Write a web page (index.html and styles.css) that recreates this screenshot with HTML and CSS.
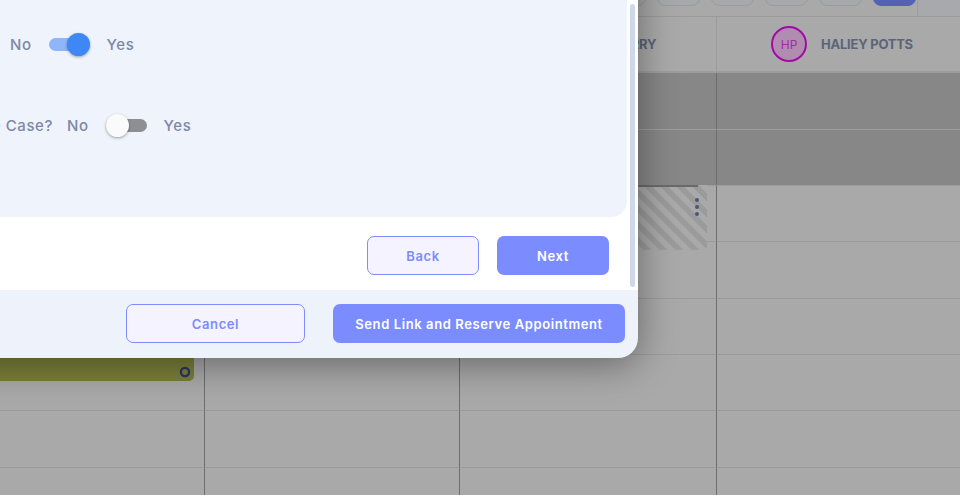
FILE: index.html
```html
<!DOCTYPE html>
<html lang="en">
<head>
<meta charset="utf-8">
<title>Schedule</title>
<link rel="stylesheet" href="styles.css">
</head>
<body>
<div class="app">
  <div class="toolbar">
    <div class="tool-group">
      <span class="tool-btn"></span>
      <span class="tool-btn"></span>
      <span class="tool-btn"></span>
      <span class="tool-btn"></span>
      <span class="tool-btn"></span>
      <span class="tool-btn"></span>
      <span class="tool-btn"></span>
      <span class="tool-btn tool-btn--active"></span>
    </div>
    <div class="toolbar-end"></div>
  </div>

  <div class="cal-header">
    <div class="col-head"></div>
    <div class="col-head">
      <span class="avatar">JD</span><span class="col-name">JANE DOE</span>
    </div>
    <div class="col-head">
      <span class="avatar">MP</span><span class="col-name">MARIA PERRY</span>
    </div>
    <div class="col-head">
      <span class="avatar">HP</span><span class="col-name">HALIEY POTTS</span>
    </div>
    <div class="col-head"></div>
  </div>

  <div class="cal-body">
    <div class="cell cell--first cell--blocked"></div>
    <div class="cell cell--blocked"></div>
    <div class="cell cell--blocked"></div>
    <div class="cell cell--blocked"></div>
    <div class="cell cell--blocked"></div>

    <div class="cell cell--first cell--blocked"></div>
    <div class="cell cell--blocked"></div>
    <div class="cell cell--blocked"></div>
    <div class="cell cell--blocked"></div>
    <div class="cell cell--blocked"></div>

    <div class="cell cell--first"></div>
    <div class="cell"></div>
    <div class="cell">
      <div class="event event--held">
        <span class="event-menu"><i></i><i></i><i></i></span>
      </div>
    </div>
    <div class="cell"></div>
    <div class="cell"></div>

    <div class="cell cell--first"></div>
    <div class="cell"></div>
    <div class="cell"></div>
    <div class="cell"></div>
    <div class="cell"></div>

    <div class="cell cell--first"></div>
    <div class="cell"></div>
    <div class="cell"></div>
    <div class="cell"></div>
    <div class="cell"></div>

    <div class="cell cell--first">
      <div class="event event--booked">
        <svg class="event-status" width="12" height="12" viewBox="0 0 12 12" aria-hidden="true">
          <circle cx="6" cy="6" r="4.1" fill="none" stroke="#2c3462" stroke-width="2.3"/>
        </svg>
      </div>
    </div>
    <div class="cell"></div>
    <div class="cell"></div>
    <div class="cell"></div>
    <div class="cell"></div>

    <div class="cell cell--first"></div>
    <div class="cell"></div>
    <div class="cell"></div>
    <div class="cell"></div>
    <div class="cell"></div>

    <div class="cell cell--first"></div>
    <div class="cell"></div>
    <div class="cell"></div>
    <div class="cell"></div>
    <div class="cell"></div>
  </div>

  <div class="modal">
    <div class="modal-main">
      <div class="modal-scroll">
        <div class="card">
          <div class="field">
            <span class="field-label field-label--a">Send Text Reminder?</span>
            <span class="opt">No</span>
            <span class="toggle toggle--on"><span class="toggle-track"></span><span class="toggle-knob"></span></span>
            <span class="opt">Yes</span>
          </div>
          <div class="field">
            <span class="field-label field-label--b">Is this an Insurance Case?</span>
            <span class="opt">No</span>
            <span class="toggle"><span class="toggle-track"></span><span class="toggle-knob"></span></span>
            <span class="opt">Yes</span>
          </div>
        </div>
        <div class="step-actions">
          <button class="btn btn--ghost btn--step">Back</button>
          <button class="btn btn--primary btn--step">Next</button>
        </div>
      </div>
      <div class="scrollbar"><span class="scrollbar-thumb"></span></div>
    </div>
    <div class="modal-footer">
      <button class="btn btn--ghost btn--cancel">Cancel</button>
      <button class="btn btn--primary btn--send">Send Link and Reserve Appointment</button>
    </div>
  </div>
</div>
</body>
</html>
```

FILE: styles.css
```css
* { box-sizing: border-box; }

body {
  margin: 0;
  width: 960px;
  height: 495px;
  overflow: hidden;
  background: #a9a9a9;
  font-family: Inter, "Noto Sans", "Liberation Sans", sans-serif;
}

.app {
  position: relative;
  height: 495px;
  overflow: hidden;
}

/* toolbar */
.toolbar {
  display: flex;
  justify-content: flex-end;
  height: 17px;
  border-bottom: 1px solid #9a9a9a;
  background: #a9a9a9;
}

.tool-group {
  display: flex;
  align-items: flex-end;
  gap: 11px;
  padding-bottom: 10px;
}

.tool-btn {
  flex: none;
  width: 43px;
  height: 30px;
  border: 1px solid #9b9b9b;
  border-radius: 8px;
  background: #a6a8ab;
}

.tool-btn--active {
  background: #5561b5;
  border-color: #5561b5;
}

.toolbar-end {
  width: 43px;
  margin-left: 1px;
  border-left: 1px solid #9c9c9c;
  background: #a7a9ac;
}

/* header */
.cal-header {
  display: grid;
  grid-template-columns: 204px 255px 257px 251px 256px;
  height: 56px;
  border-bottom: 2px solid #9d9d9d;
}

.col-head {
  display: flex;
  align-items: center;
  justify-content: center;
  gap: 14px;
  border-left: 1px solid #9b9b9b;
}

.col-head:first-child { border-left: none; }

.avatar {
  width: 36px;
  height: 36px;
  border-radius: 50%;
  border: 2px solid #a30ba6;
  background: #b08db0;
  color: #a42aa7;
  font-size: 12px;
  display: flex;
  align-items: center;
  justify-content: center;
}

.col-name {
  font-size: 13px;
  font-weight: 700;
  color: #5b6478;
  letter-spacing: -0.25px;
}

/* body grid */
.cal-body {
  display: grid;
  grid-template-columns: 204px 255px 257px 251px 256px;
  grid-template-rows: 57px 56px 56px 57px 56px 56px 57px 56px;
}

.cell {
  position: relative;
  background: #a9a9a9;
  border-bottom: 1px solid #9a9a9a;
  border-left: 1px solid #6e6e6e;
}

.cell--first { border-left: none; }

.cell--blocked {
  background: #878787;
  border-bottom-color: #9d9d9d;
}

/* events */
.event {
  position: absolute;
  z-index: 1;
}

.event--held {
  top: -1px;
  left: 0;
  right: 9px;
  height: 65px;
  border-radius: 0 0 5px 0;
  background: repeating-linear-gradient(45deg, #a9a9a9 0 5.6px, #9b9b9b 5.6px 11.3px);
}

.event--held::before {
  content: "";
  position: absolute;
  top: 0;
  left: 0;
  right: 9px;
  height: 2px;
  background: #6a6a6a;
}

.event-menu {
  position: absolute;
  top: 13px;
  right: 8px;
  display: flex;
  flex-direction: column;
  gap: 3px;
}

.event-menu i {
  display: block;
  width: 4px;
  height: 4px;
  border-radius: 50%;
  background: #4b5579;
}

.event--booked {
  top: -80px;
  left: 0;
  right: 10px;
  height: 106px;
  border-radius: 0 0 5px 0;
  background: #7b8039;
}

.event-status {
  position: absolute;
  right: 3px;
  bottom: 3px;
}

/* modal */
.modal {
  position: absolute;
  z-index: 5;
  left: -302px;
  top: -60px;
  width: 940px;
  height: 418px;
  display: flex;
  flex-direction: column;
  background: #eef3fb;
  border-radius: 0 0 20px 0;
  overflow: hidden;
  box-shadow: 0 6px 38px rgba(0, 0, 0, 0.4);
}

.modal-main {
  flex: 1;
  display: flex;
  background: #ffffff;
}

.modal-scroll {
  flex: 1;
  display: flex;
  flex-direction: column;
  padding-left: 24px;
}

.card {
  flex: 1;
  display: flex;
  flex-direction: column;
  gap: 41px;
  padding: 84px 0 0 24px;
  background: #eef3fc;
  border-radius: 16px;
}

.field {
  display: flex;
  align-items: center;
  height: 40px;
}

.field-label,
.opt {
  font-size: 15px;
  font-weight: 500;
  color: #7d88a5;
  letter-spacing: 0.6px;
  white-space: nowrap;
}

.field-label {
  flex: none;
  margin-right: 14px;
  text-align: right;
}

.field-label--a { width: 250px; }
.field-label--b { width: 307px; }

.toggle {
  position: relative;
  flex: none;
  width: 41px;
  height: 23px;
  margin: 0 17px;
}

.toggle-track {
  position: absolute;
  left: 0;
  right: 0;
  top: 5px;
  height: 13px;
  border-radius: 7px;
  background: #8e8f94;
}

.toggle-knob {
  position: absolute;
  top: 0;
  left: 0;
  width: 23px;
  height: 23px;
  border-radius: 50%;
  background: #fafafa;
  box-shadow: 0 1px 3px rgba(0, 0, 0, 0.35);
}

.toggle--on .toggle-track { background: #8fb6fb; }

.toggle--on .toggle-knob {
  left: auto;
  right: 0;
  background: #3d87f6;
}

.step-actions {
  display: flex;
  justify-content: flex-end;
  gap: 18px;
  padding: 19px 18px 15px 0;
}

.btn {
  height: 39px;
  display: flex;
  align-items: center;
  justify-content: center;
  border-radius: 7px;
  font-family: inherit;
  font-size: 13px;
  font-weight: 600;
  letter-spacing: 0.6px;
  cursor: pointer;
}

.btn--ghost {
  border: 1px solid #7d8cff;
  background: #f5f3ff;
  color: #7b8cff;
}

.btn--primary {
  border: none;
  background: #7b8cff;
  color: #ffffff;
}

.btn--step { width: 112px; }
.btn--cancel { width: 179px; }
.btn--send { width: 292px; }

.scrollbar {
  flex: none;
  display: flex;
  width: 11px;
  padding: 64px 3px 3px;
}

.scrollbar-thumb {
  flex: 1;
  border-radius: 3px;
  background: #cfd8ea;
}

.modal-footer {
  flex: none;
  display: flex;
  justify-content: flex-end;
  align-items: flex-start;
  gap: 28px;
  height: 68px;
  padding: 14px 13px 0 0;
}
```
